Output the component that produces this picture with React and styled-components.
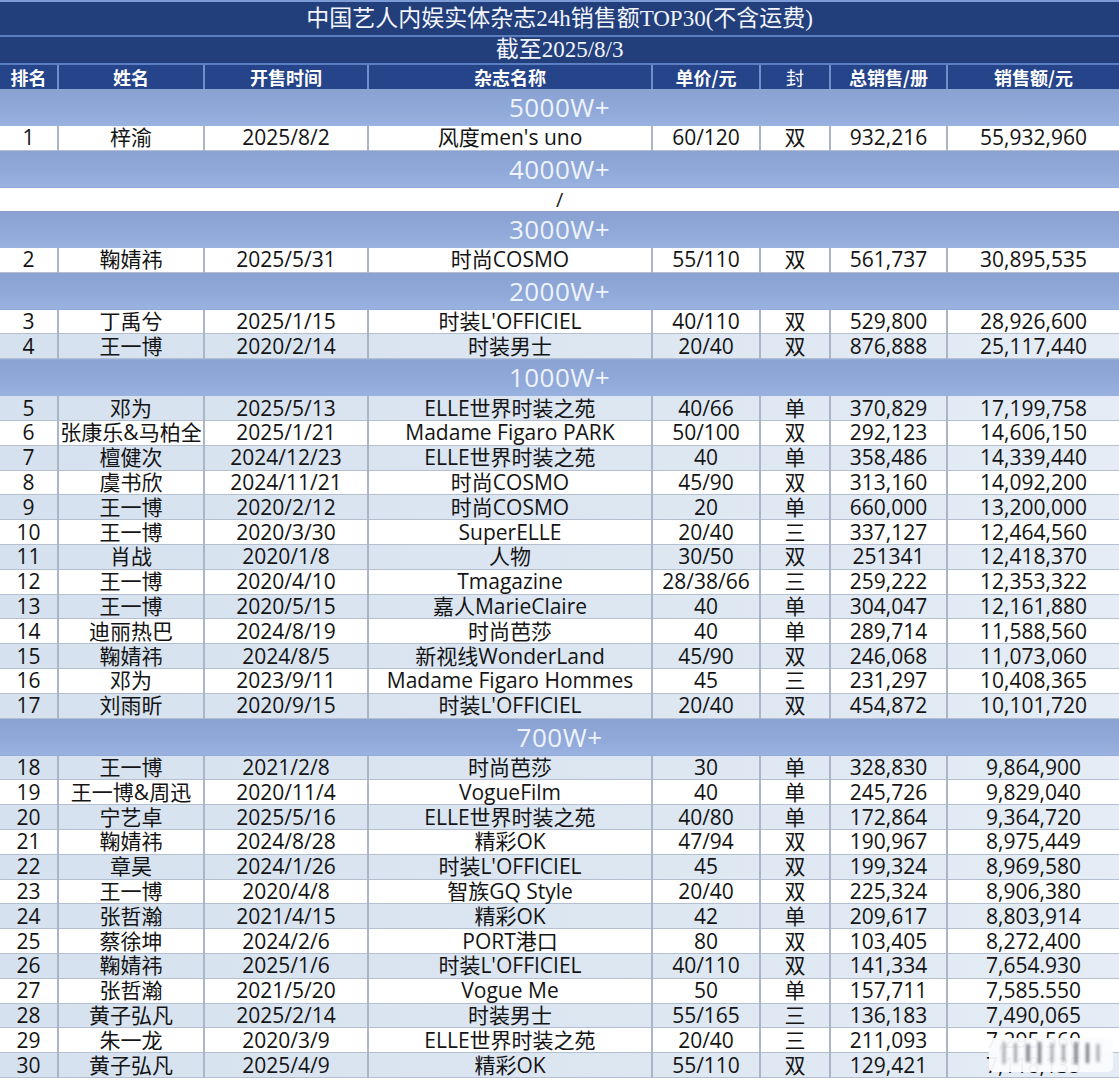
import React from 'react'
import styled, { createGlobalStyle } from 'styled-components'

const Global = createGlobalStyle`
  body {
    margin: 0;
    background: #ffffff;
  }
`

const Wrapper = styled.div`
  position: relative;
  width: 1119px;
  height: 1080px;
  overflow: hidden;
`

const Table = styled.table`
  width: 1119px;
  table-layout: fixed;
  border-collapse: collapse;
  font-family: "Open Sans", "Noto Sans CJK SC", sans-serif;
`

const TitleCell = styled.td`
  height: ${p => p.h}px;
  padding: 0;
  background: #223f7c;
  color: #f2f5fc;
  text-align: center;
  font-family: "Liberation Serif", "Noto Sans CJK SC", serif;
  font-size: 23px;
  line-height: ${p => p.h}px;
  border-bottom: 2px solid #5c7fc2;
  border-top: ${p => (p.top ? '2px solid #7d9bd6' : 'none')};
`

const HeadCell = styled.th`
  height: 24px;
  padding: 0;
  background: #26448a;
  color: #ffffff;
  font-family: "Noto Sans CJK SC", sans-serif;
  font-size: 18px;
  font-weight: ${p => (p.light ? 400 : 700)};
  line-height: 24px;
  text-align: center;
  border-right: 2px solid #6f8fcf;
  &:last-child {
    border-right: none;
  }
`

const BandCell = styled.td`
  height: 37px;
  padding: 0;
  background: linear-gradient(180deg, #89a2d2 0%, #90a9d8 60%, #9ab2e0 100%);
  color: #eef3fc;
  font-size: 26px;
  line-height: 37px;
  text-align: center;
  letter-spacing: 0.5px;
`

const SlashCell = styled.td`
  height: 23px;
  padding: 0;
  background: #ffffff;
  color: #222;
  font-size: 20px;
  line-height: 23px;
  text-align: center;
`

const Row = styled.tr`
  background: ${p =>
    p.alt
      ? 'linear-gradient(90deg, #d6e1ef 0%, #dde7f2 60%, #e5ecf5 100%)'
      : '#ffffff'};
`

const Cell = styled.td`
  padding: 0;
  height: 23.8px;
  color: #141414;
  font-size: 21px;
  line-height: 23px;
  text-align: center;
  white-space: nowrap;
  border-right: 2px solid #aab5c8;
  border-bottom: 1px solid #b4bfd0;
  &:last-child {
    border-right: none;
  }
`

const Watermark = styled.svg`
  position: absolute;
  left: 988px;
  top: 1036px;
`

const cols = [58, 146, 164, 284, 108, 70, 117, 172]

const sections = [
  {
    band: '5000W+',
    start: false,
    rows: [['1', '梓渝', '2025/8/2', "风度men's uno", '60/120', '双', '932,216', '55,932,960']],
  },
  { band: '4000W+', empty: true, rows: [] },
  {
    band: '3000W+',
    start: false,
    rows: [['2', '鞠婧祎', '2025/5/31', '时尚COSMO', '55/110', '双', '561,737', '30,895,535']],
  },
  {
    band: '2000W+',
    start: false,
    rows: [
      ['3', '丁禹兮', '2025/1/15', "时装L'OFFICIEL", '40/110', '双', '529,800', '28,926,600'],
      ['4', '王一博', '2020/2/14', '时装男士', '20/40', '双', '876,888', '25,117,440'],
    ],
  },
  {
    band: '1000W+',
    start: true,
    rows: [
      ['5', '邓为', '2025/5/13', 'ELLE世界时装之苑', '40/66', '单', '370,829', '17,199,758'],
      ['6', '张康乐&马柏全', '2025/1/21', 'Madame Figaro PARK', '50/100', '双', '292,123', '14,606,150'],
      ['7', '檀健次', '2024/12/23', 'ELLE世界时装之苑', '40', '单', '358,486', '14,339,440'],
      ['8', '虞书欣', '2024/11/21', '时尚COSMO', '45/90', '双', '313,160', '14,092,200'],
      ['9', '王一博', '2020/2/12', '时尚COSMO', '20', '单', '660,000', '13,200,000'],
      ['10', '王一博', '2020/3/30', 'SuperELLE', '20/40', '三', '337,127', '12,464,560'],
      ['11', '肖战', '2020/1/8', '人物', '30/50', '双', '251341', '12,418,370'],
      ['12', '王一博', '2020/4/10', 'Tmagazine', '28/38/66', '三', '259,222', '12,353,322'],
      ['13', '王一博', '2020/5/15', '嘉人MarieClaire', '40', '单', '304,047', '12,161,880'],
      ['14', '迪丽热巴', '2024/8/19', '时尚芭莎', '40', '单', '289,714', '11,588,560'],
      ['15', '鞠婧祎', '2024/8/5', '新视线WonderLand', '45/90', '双', '246,068', '11,073,060'],
      ['16', '邓为', '2023/9/11', 'Madame Figaro Hommes', '45', '三', '231,297', '10,408,365'],
      ['17', '刘雨昕', '2020/9/15', "时装L'OFFICIEL", '20/40', '双', '454,872', '10,101,720'],
    ],
  },
  {
    band: '700W+',
    start: true,
    rows: [
      ['18', '王一博', '2021/2/8', '时尚芭莎', '30', '单', '328,830', '9,864,900'],
      ['19', '王一博&周迅', '2020/11/4', 'VogueFilm', '40', '单', '245,726', '9,829,040'],
      ['20', '宁艺卓', '2025/5/16', 'ELLE世界时装之苑', '40/80', '单', '172,864', '9,364,720'],
      ['21', '鞠婧祎', '2024/8/28', '精彩OK', '47/94', '双', '190,967', '8,975,449'],
      ['22', '章昊', '2024/1/26', "时装L'OFFICIEL", '45', '双', '199,324', '8,969,580'],
      ['23', '王一博', '2020/4/8', '智族GQ Style', '20/40', '双', '225,324', '8,906,380'],
      ['24', '张哲瀚', '2021/4/15', '精彩OK', '42', '单', '209,617', '8,803,914'],
      ['25', '蔡徐坤', '2024/2/6', 'PORT港口', '80', '双', '103,405', '8,272,400'],
      ['26', '鞠婧祎', '2025/1/6', "时装L'OFFICIEL", '40/110', '双', '141,334', '7,654.930'],
      ['27', '张哲瀚', '2021/5/20', 'Vogue Me', '50', '单', '157,711', '7,585.550'],
      ['28', '黄子弘凡', '2025/2/14', '时装男士', '55/165', '三', '136,183', '7,490,065'],
      ['29', '朱一龙', '2020/3/9', 'ELLE世界时装之苑', '20/40', '三', '211,093', '7,295,560'],
      ['30', '黄子弘凡', '2025/4/9', '精彩OK', '55/110', '双', '129,421', '7,118,135'],
    ],
  },
]

const headers = ['排名', '姓名', '开售时间', '杂志名称', '单价/元', '封', '总销售/册', '销售额/元']

// blurred vertical strokes of the watermark sticker over the last column
const strokes = [14, 26, 38, 50, 62, 74, 86, 98, 108]

const App = () => {
  return (
    <Wrapper>
      <Global />
      <Table>
        <colgroup>
          {cols.map((w, i) => (
            <col key={i} style={{ width: w }} />
          ))}
        </colgroup>
        <tbody>
          <tr>
            <TitleCell colSpan={8} h={33} top>
              中国艺人内娱实体杂志24h销售额TOP30(不含运费)
            </TitleCell>
          </tr>
          <tr>
            <TitleCell colSpan={8} h={26}>
              截至2025/8/3
            </TitleCell>
          </tr>
          <tr>
            {headers.map(h => (
              <HeadCell key={h} light={h === '封'}>
                {h}
              </HeadCell>
            ))}
          </tr>
          {sections.map(sec => (
            <React.Fragment key={sec.band}>
              <tr>
                <BandCell colSpan={8}>{sec.band}</BandCell>
              </tr>
              {sec.empty && (
                <tr>
                  <SlashCell colSpan={8}>/</SlashCell>
                </tr>
              )}
              {sec.rows.map((r, i) => (
                <Row key={r[0]} alt={sec.start ? i % 2 === 0 : i % 2 === 1}>
                  {r.map((v, j) => (
                    <Cell key={j}>{v}</Cell>
                  ))}
                </Row>
              ))}
            </React.Fragment>
          ))}
        </tbody>
      </Table>
      <Watermark width="126" height="38" viewBox="0 0 126 38">
        <defs>
          <filter id="wmblur" x="-20%" y="-20%" width="140%" height="140%">
            <feGaussianBlur stdDeviation="1.6" />
          </filter>
        </defs>
        <rect x="1" y="2" width="124" height="34" rx="5" fill="#fbfcfd" opacity="0.95" />
        <g filter="url(#wmblur)" fill="#3a3f48">
          {strokes.map((x, i) => (
            <rect key={i} x={x} y={6 + (i % 3)} width={i % 2 ? 3 : 4} height={22 - (i % 3) * 2} opacity={0.35 + (i % 4) * 0.12} />
          ))}
        </g>
      </Watermark>
    </Wrapper>
  )
}

export default App
